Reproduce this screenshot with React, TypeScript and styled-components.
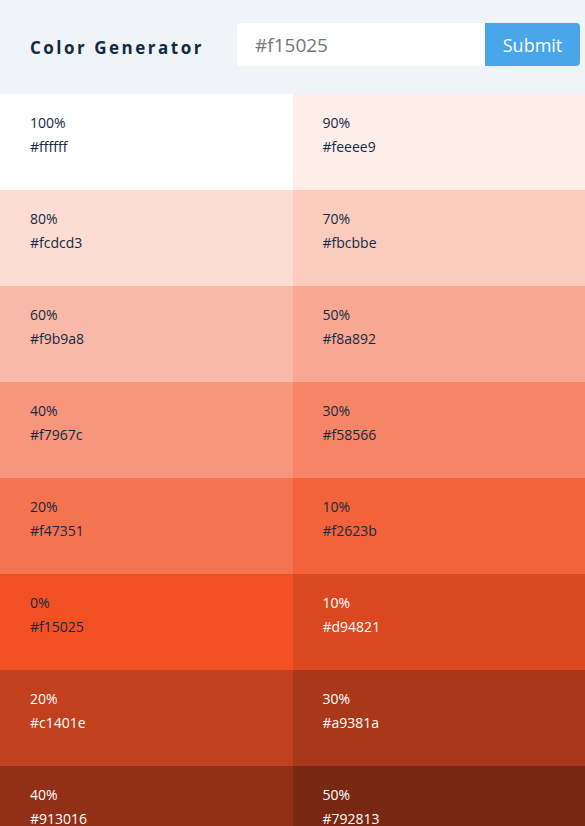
import React, {useState} from "react"
import styled, {createGlobalStyle} from "styled-components"

const GlobalStyle = createGlobalStyle`
  * {
    box-sizing: border-box;
  }
  body {
    margin: 0;
    background: #fff;
    font-family: "Open Sans", "Noto Sans", sans-serif;
  }
`

const Header = styled.section`
  display: flex;
  align-items: center;
  height: 94px;
  padding: 0 5px 0 30px;
  background: #f0f4f8;
`

const Title = styled.h3`
  flex-shrink: 0;
  margin: 0;
  white-space: nowrap;
  font-family: "Open Sans", sans-serif;
  font-size: 17px;
  font-weight: 700;
  letter-spacing: 2.5px;
  color: #102a43;
`

const Form = styled.form`
  display: flex;
  flex: 0 0 343px;
  min-width: 0;
  align-self: flex-start;
  margin: 23px 0 0 auto;
  height: 43px;
`

const Input = styled.input`
  flex: 1 1 0;
  width: 0;
  min-width: 0;
  border: none;
  outline: none;
  padding: 0 18px;
  border-radius: 4px 0 0 4px;
  background: #fff;
  font-family: "Open Sans", sans-serif;
  font-size: 19px;
  color: #757575;
`

const Button = styled.button`
  flex: 0 0 95px;
  border: none;
  border-radius: 0 4px 4px 0;
  background: #49a6e9;
  color: #fff;
  font-family: "Open Sans", sans-serif;
  font-size: 18px;
  cursor: pointer;
`

const Grid = styled.section`
  display: grid;
  grid-template-columns: 1fr 1fr;
  grid-auto-rows: 96px;
`

const Swatch = styled.article<{$light: boolean}>`
  padding: 17px 30px;
  font-size: 14px;
  line-height: 24px;
  color: ${(p) => (p.$light ? "#fff" : "#102a43")};
`

const Line = styled.p`
  margin: 0;
`

const shades = [
  ["100%", "#ffffff"],
  ["90%", "#feeee9"],
  ["80%", "#fcdcd3"],
  ["70%", "#fbcbbe"],
  ["60%", "#f9b9a8"],
  ["50%", "#f8a892"],
  ["40%", "#f7967c"],
  ["30%", "#f58566"],
  ["20%", "#f47351"],
  ["10%", "#f2623b"],
  ["0%", "#f15025"],
  ["10%", "#d94821"],
  ["20%", "#c1401e"],
  ["30%", "#a9381a"],
  ["40%", "#913016"],
  ["50%", "#792813"],
]

export default function App() {
  const [color, setColor] = useState("#f15025")
  return (
    <>
      <GlobalStyle />
      <Header>
        <Title>Color Generator</Title>
        <Form onSubmit={(e) => e.preventDefault()}>
          <Input value={color} onChange={(e) => setColor(e.target.value)} />
          <Button type="submit">Submit</Button>
        </Form>
      </Header>
      <Grid>
        {shades.map(([weight, hex], i) => (
          <Swatch key={i} $light={i > 10} style={{background: hex}}>
            <Line>{weight}</Line>
            <Line>{hex}</Line>
          </Swatch>
        ))}
      </Grid>
    </>
  )
}
